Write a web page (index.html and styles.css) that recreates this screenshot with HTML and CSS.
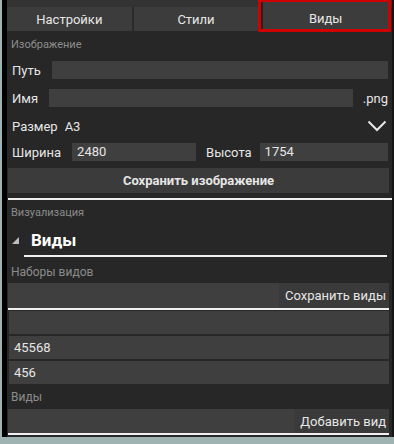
FILE: index.html
```html
<!DOCTYPE html>
<html>
<head>
    <title>Виды</title>
    <meta name="viewport" content="width=device-width, initial-scale=1.0">
    <link rel="stylesheet" href="styles.css">
</head>
<body>
    <div class="window">
        <div class="topbar"><span class="grip"></span></div>
        <div class="tabs">
            <div class="tab">Настройки</div>
            <div class="tab">Стили</div>
            <div class="tab active">Виды</div>
        </div>

        <div class="section-label first">Изображение</div>

        <div class="row">
            <span class="label">Путь</span>
            <div class="input"></div>
        </div>
        <div class="row">
            <span class="label">Имя</span>
            <div class="input"></div>
            <span class="suffix">.png</span>
        </div>
        <div class="row size-row">
            <span class="label">Размер</span>
            <span class="value">А3</span>
            <svg class="chevron" width="20" height="12" viewBox="0 0 20 12">
                <polyline points="1.5,1.5 10,10 18.5,1.5" fill="none" stroke="#e8e8e8" stroke-width="2"/>
            </svg>
        </div>
        <div class="row">
            <span class="label">Ширина</span>
            <div class="input short">2480</div>
            <span class="label second">Высота</span>
            <div class="input">1754</div>
        </div>

        <div class="button bold">Сохранить изображение</div>
        <div class="rule"></div>

        <div class="section-label">Визуализация</div>
        <div class="heading">
            <span class="triangle"></span>
            <span>Виды</span>
        </div>

        <div class="section-label sub">Наборы видов</div>
        <div class="bar"><span class="bar-btn">Сохранить виды</span></div>
        <div class="list">
            <div class="item"></div>
            <div class="item">45568</div>
            <div class="item">456</div>
        </div>
        <div class="section-label views">Виды</div>
        <div class="bar"><span class="bar-btn">Добавить вид</span></div>
    </div>
</body>
</html>
```

FILE: styles.css
```css
body {
    margin: 0;
    background-color: #9fb3b2;
    font-family: Roboto, "Liberation Sans", sans-serif;
    color: #e6e6e6;
    font-size: 13px;
}

.window {
    margin-left: 2px;
    height: 437px;
    background-color: #272727;
    border-left: 5px solid #000;
    border-right: 2px solid #151515;
}

.topbar {
    height: 7px;
    background-color: #333;
    position: relative;
}

.grip {
    position: absolute;
    right: 3px;
    top: 3px;
    width: 13px;
    height: 4px;
    background-color: #8a8a8a;
}

.tabs {
    display: flex;
    gap: 2px;
    height: 24px;
    padding-right: 4px;
    background-color: #2a2a2a;
}

.tab {
    flex: 1;
    background-color: #3c3c3c;
    display: flex;
    align-items: center;
    justify-content: center;
    font-size: 13px;
}

.tab.active {
    outline: 3px solid #d10000;
    margin-left: 1px;
    position: relative;
    top: -5px;
    height: 27px;
    padding-top: 5px;
    box-sizing: border-box;
    border-left: 2px solid #222;
}

.section-label {
    font-size: 11px;
    color: #8c8c8c;
    padding: 6px 0 0 4px;
    height: 18px;
}

.section-label.first {
    padding-top: 7px;
    height: 23px;
}

.row {
    display: flex;
    align-items: center;
    height: 18px;
    margin: 0 4px 10px 5px;
}

.label {
    font-size: 13px;
    margin-right: 11px;
}

.label.second {
    margin: 0 8px 0 10px;
}

.input {
    flex: 1;
    height: 18px;
    background-color: #3f3f3f;
    font-size: 13px;
    line-height: 18px;
    padding-left: 5px;
}

.input.short {
    flex: 0 0 119px;
}

.suffix {
    font-size: 13px;
    margin-left: 10px;
}

.size-row {
    margin-bottom: 8px;
}

.value {
    font-size: 13px;
    margin-left: -4px;
}

.chevron {
    margin-left: auto;
    margin-right: 1px;
}

.button {
    height: 25px;
    margin: -3px 3px 0 1px;
    background-color: #3b3b3b;
    display: flex;
    align-items: center;
    justify-content: center;
    font-size: 13px;
}

.bold {
    font-weight: bold;
}

.rule {
    height: 2px;
    background-color: #f0f0f0;
    margin: 5px 0 0 1px;
}

.heading {
    display: flex;
    align-items: center;
    height: 31px;
    font-size: 17px;
    font-weight: bold;
    color: #fff;
    border-bottom: 2px solid #f0f0f0;
    margin: 0 5px 0 17px;
}

.triangle {
    width: 0;
    height: 0;
    border-left: 7px solid transparent;
    border-bottom: 7px solid #bdbdbd;
    margin: 2px 12px 0 -12px;
}

.section-label.sub {
    font-size: 12px;
    padding-top: 8px;
    height: 18px;
}

.bar {
    height: 25px;
    margin: 0 3px 0 1px;
    background-color: #3f3f3f;
    border-bottom: 2px solid #f0f0f0;
    display: flex;
    justify-content: flex-end;
}

.bar-btn {
    background-color: #3a3a3a;
    padding: 0 3px 0 6px;
    display: flex;
    align-items: center;
    font-size: 13px;
}

.list {
    padding: 1px 3px 0 2px;
}

.item {
    height: 23px;
    margin-bottom: 2px;
    background-color: #3f3f3f;
    font-size: 13px;
    line-height: 23px;
    padding-left: 5px;
}

.item:last-child {
    margin-bottom: 0;
}

.section-label.views {
    font-size: 12px;
    height: 19px;
    padding-top: 6px;
}

.section-label.views + .bar {
    height: 24px;
}
```
